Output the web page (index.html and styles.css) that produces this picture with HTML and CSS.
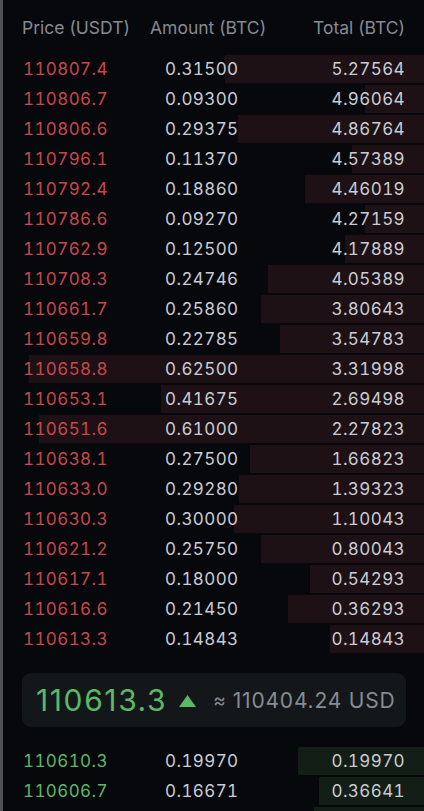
FILE: index.html
```html
<!DOCTYPE html>
<html lang="en">
<head>
<meta charset="utf-8">
<title>Order book</title>
<link rel="stylesheet" href="styles.css">
</head>
<body>
<div class="book">
  <div class="head">
    <span class="h-price">Price (USDT)</span>
    <span class="h-amount">Amount (BTC)</span>
    <span class="h-total">Total (BTC)</span>
  </div>
  <div class="rows asks">
    <div class="row"><i class="bar" style="width:199px"></i><span class="p">110807.4</span><span class="a">0.31500</span><span class="t">5.27564</span></div>
    <div class="row"><i class="bar" style="width:59px"></i><span class="p">110806.7</span><span class="a">0.09300</span><span class="t">4.96064</span></div>
    <div class="row"><i class="bar" style="width:186px"></i><span class="p">110806.6</span><span class="a">0.29375</span><span class="t">4.86764</span></div>
    <div class="row"><i class="bar" style="width:72px"></i><span class="p">110796.1</span><span class="a">0.11370</span><span class="t">4.57389</span></div>
    <div class="row"><i class="bar" style="width:119px"></i><span class="p">110792.4</span><span class="a">0.18860</span><span class="t">4.46019</span></div>
    <div class="row"><i class="bar" style="width:59px"></i><span class="p">110786.6</span><span class="a">0.09270</span><span class="t">4.27159</span></div>
    <div class="row"><i class="bar" style="width:79px"></i><span class="p">110762.9</span><span class="a">0.12500</span><span class="t">4.17889</span></div>
    <div class="row"><i class="bar" style="width:156px"></i><span class="p">110708.3</span><span class="a">0.24746</span><span class="t">4.05389</span></div>
    <div class="row"><i class="bar" style="width:163px"></i><span class="p">110661.7</span><span class="a">0.25860</span><span class="t">3.80643</span></div>
    <div class="row"><i class="bar" style="width:144px"></i><span class="p">110659.8</span><span class="a">0.22785</span><span class="t">3.54783</span></div>
    <div class="row"><i class="bar" style="width:395px"></i><span class="p">110658.8</span><span class="a">0.62500</span><span class="t">3.31998</span></div>
    <div class="row"><i class="bar" style="width:263px"></i><span class="p">110653.1</span><span class="a">0.41675</span><span class="t">2.69498</span></div>
    <div class="row"><i class="bar" style="width:385px"></i><span class="p">110651.6</span><span class="a">0.61000</span><span class="t">2.27823</span></div>
    <div class="row"><i class="bar" style="width:174px"></i><span class="p">110638.1</span><span class="a">0.27500</span><span class="t">1.66823</span></div>
    <div class="row"><i class="bar" style="width:185px"></i><span class="p">110633.0</span><span class="a">0.29280</span><span class="t">1.39323</span></div>
    <div class="row"><i class="bar" style="width:190px"></i><span class="p">110630.3</span><span class="a">0.30000</span><span class="t">1.10043</span></div>
    <div class="row"><i class="bar" style="width:163px"></i><span class="p">110621.2</span><span class="a">0.25750</span><span class="t">0.80043</span></div>
    <div class="row"><i class="bar" style="width:114px"></i><span class="p">110617.1</span><span class="a">0.18000</span><span class="t">0.54293</span></div>
    <div class="row"><i class="bar" style="width:136px"></i><span class="p">110616.6</span><span class="a">0.21450</span><span class="t">0.36293</span></div>
    <div class="row"><i class="bar" style="width:94px"></i><span class="p">110613.3</span><span class="a">0.14843</span><span class="t">0.14843</span></div>
  </div>
  <div class="mid">
    <span class="last">110613.3</span>
    <svg class="tri" width="17" height="12" viewBox="0 0 17 12"><polygon points="8.5,0 17,12 0,12" fill="#5cb866"/></svg>
    <span class="approx">≈</span>
    <span class="usd">110404.24 USD</span>
  </div>
  <div class="rows bids">
    <div class="row"><i class="bar" style="width:126px"></i><span class="p">110610.3</span><span class="a">0.19970</span><span class="t">0.19970</span></div>
    <div class="row"><i class="bar" style="width:105px"></i><span class="p">110606.7</span><span class="a">0.16671</span><span class="t">0.36641</span></div>
    <div class="row"><i class="bar" style="width:110px"></i></div>
  </div>
</div>
</body>
</html>
```

FILE: styles.css
```css
* { box-sizing: border-box; }
html, body {
  margin: 0;
  padding: 0;
  background: #07080b;
  height: 100%;
  overflow: hidden;
}
.book {
  border-left: 3px solid #4e5156;
  min-height: 100%;
  font-family: Inter, "Noto Sans", sans-serif;
  color: #c9cdd3;
}
.head {
  height: 54px;
  display: grid;
  grid-template-columns: 128px 1fr auto;
  align-items: center;
  padding: 0 19px 0 19px;
  font-size: 17.5px;
  color: #858a93;
}
.h-total { text-align: right; }
.row {
  position: relative;
  height: 30px;
  display: grid;
  grid-template-columns: 142px 1fr auto;
  align-items: center;
  padding: 0 19px 0 20px;
  font-size: 17px;
  font-variant-numeric: tabular-nums;
  letter-spacing: 0.4px;
}
.row span { position: relative; }
.bar {
  position: absolute;
  right: 0;
  top: 1px;
  bottom: 1px;
}
.asks .bar { background: #1e1115; }
.bids .bar { background: #131e17; }
.asks .p { color: #c8474c; }
.bids .p { color: #5cb866; }
.t { text-align: right; }
.mid {
  margin: 19px 18px 19px 19px;
  height: 54px;
  background: #13171a;
  border-radius: 9px;
  display: flex;
  align-items: center;
  padding-left: 14px;
}
.last {
  font-size: 30px;
  color: #5cb866;
  letter-spacing: 1.6px;
}
.tri { margin-left: 12px; margin-top: 1px; }
.approx {
  margin-left: 17px;
  color: #878c95;
  font-size: 19px;
}
.usd {
  margin-left: 7px;
  color: #878c95;
  font-size: 21px;
  letter-spacing: 0.8px;
}
```
